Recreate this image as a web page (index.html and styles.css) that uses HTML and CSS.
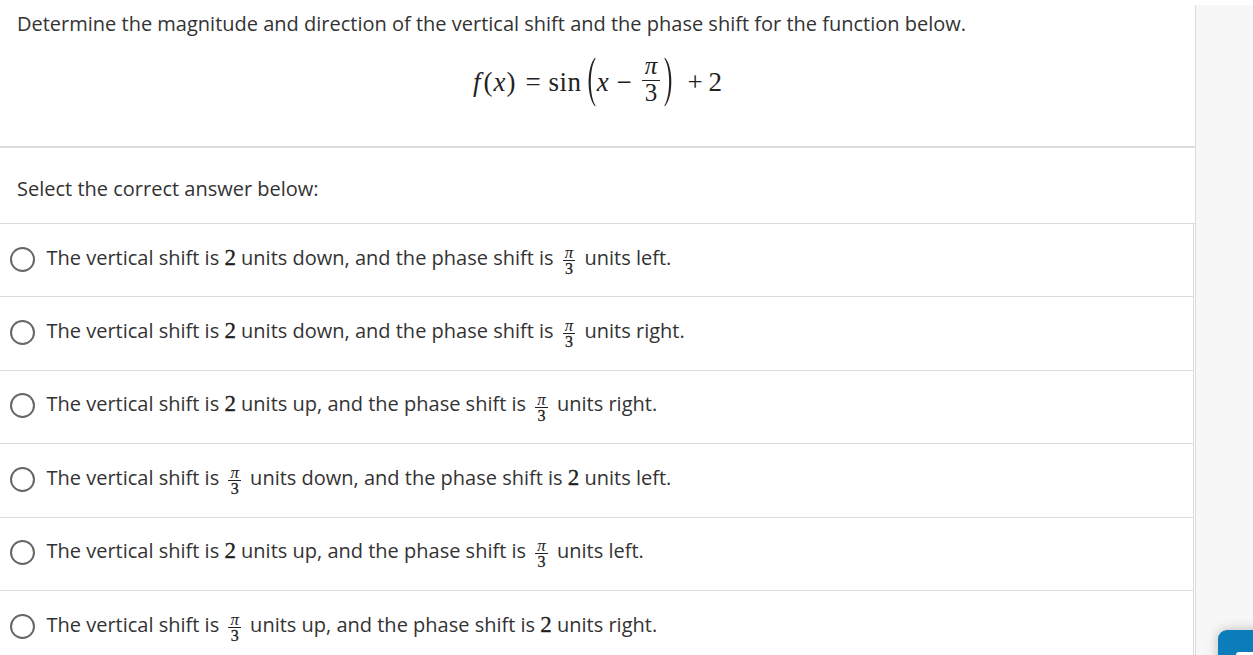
FILE: index.html
```html
<!DOCTYPE html>
<html lang="en">
<head>
<meta charset="utf-8">
<title>Question</title>
<link rel="stylesheet" href="styles.css">
</head>
<body>
<div class="page">
  <main class="main">
    <section class="question">
      <p class="prompt">Determine the magnitude and direction of the vertical shift and the phase shift for the function below.</p>
      <div class="formula">
        <span class="mi f">f</span><span class="mo">(</span><span class="mi x1">x</span><span class="mo">)</span>
        <span class="rel">=</span>
        <span class="op">sin</span>
        <svg class="paren" viewBox="0 0 12 50" width="12" height="50"><path d="M11,0.8 C2.5,10 2.5,40 11,49.2 L11.6,48.6 C5.2,39 5.2,11 11.6,1.4 Z"/></svg>
        <span class="mi">x</span>
        <span class="bin">−</span>
        <span class="dfrac"><span class="dnum mi">π</span><span class="dden">3</span></span>
        <svg class="paren" viewBox="0 0 12 50" width="12" height="50"><path d="M1,0.8 C9.5,10 9.5,40 1,49.2 L0.4,48.6 C6.8,39 6.8,11 0.4,1.4 Z"/></svg>
        <span class="bin plus">+</span>
        <span class="mn">2</span>
      </div>
    </section>
    <div class="instr">Select the correct answer below:</div>
    <ul class="options">
      <li class="option"><span class="radio"></span><span class="label">The vertical shift is <span class="num">2</span> units down, and the phase shift is <span class="frac"><span class="fnum">π</span><span class="fden">3</span></span> units left.</span></li>
      <li class="option"><span class="radio"></span><span class="label">The vertical shift is <span class="num">2</span> units down, and the phase shift is <span class="frac"><span class="fnum">π</span><span class="fden">3</span></span> units right.</span></li>
      <li class="option"><span class="radio"></span><span class="label">The vertical shift is <span class="num">2</span> units up, and the phase shift is <span class="frac"><span class="fnum">π</span><span class="fden">3</span></span> units right.</span></li>
      <li class="option"><span class="radio"></span><span class="label">The vertical shift is <span class="frac"><span class="fnum">π</span><span class="fden">3</span></span> units down, and the phase shift is <span class="num">2</span> units left.</span></li>
      <li class="option"><span class="radio"></span><span class="label">The vertical shift is <span class="num">2</span> units up, and the phase shift is <span class="frac"><span class="fnum">π</span><span class="fden">3</span></span> units left.</span></li>
      <li class="option"><span class="radio"></span><span class="label">The vertical shift is <span class="frac"><span class="fnum">π</span><span class="fden">3</span></span> units up, and the phase shift is <span class="num">2</span> units right.</span></li>
    </ul>
  </main>
  <aside class="side"></aside>
</div>
<div class="fab"><span class="fab-icon"></span></div>
</body>
</html>
```

FILE: styles.css
```css
html, body {
  margin: 0;
  padding: 0;
  background: #fff;
}
body {
  font-family: "Open Sans", "Noto Sans", sans-serif;
  color: #333;
  overflow: hidden;
}
.page {
  display: flex;
  height: 655px;
  overflow: hidden;
}
.main {
  width: 1195px;
  flex: none;
}
.side {
  flex: 1;
  margin-top: 5px;
  border-left: 1px solid #dcdcdc;
  background: #f7f7f7;
}

/* question */
.question {
  height: 146px;
  border-bottom: 2px solid #dcdcdc;
}
.prompt {
  margin: 0;
  padding: 10px 0 0 17px;
  font-size: 20px;
  line-height: 27px;
}
.formula {
  margin-top: 20px;
  height: 50px;
  display: flex;
  justify-content: center;
  align-items: center;
  font-family: "Liberation Serif", "DejaVu Serif", serif;
  font-size: 27px;
  color: #222;
}
.formula .mi { font-style: italic; }
.formula .f { margin-right: 3px; }
.formula .x1 { margin: 0 1px; }
.formula .rel { margin: 0 8px 0 10px; }
.formula .op { letter-spacing: 0.5px; }
.formula .bin { margin: 0 8px; }
.formula .plus { margin: 0 6px 0 10px; }
.paren { fill: #222; display: block; margin: 0 1px 0 2px; }
.dfrac {
  display: inline-flex;
  flex-direction: column;
  align-items: center;
  margin: 0 2px;
  transform: translateY(-2px);
  font-size: 25px;
}
.dnum {
  line-height: 22px;
  padding: 0 3px 3px;
  border-bottom: 1px solid #222;
}
.dden { line-height: 24px; }

/* instruction */
.instr {
  height: 76px;
  box-sizing: border-box;
  padding: 27px 0 0 17px;
  font-size: 20px;
  line-height: 27px;
  border-bottom: 1px solid #dcdcdc;
}

/* options */
.options {
  list-style: none;
  margin: 0;
  padding: 0;
  width: 1193px;
  border-right: 1px solid #dcdcdc;
}
.option {
  height: 72.4px;
  border-bottom: 1px solid #dcdcdc;
  display: flex;
  align-items: center;
}
.radio {
  flex: none;
  width: 25px;
  height: 25px;
  box-sizing: border-box;
  border: 2.5px solid #666;
  border-radius: 50%;
  margin-left: 9.5px;
  margin-right: 12px;
  transform: translateY(-1px);
}
.label {
  font-size: 20px;
  line-height: 29px;
  transform: translateY(-2px);
}
.num {
  font-family: "Liberation Serif", "DejaVu Serif", serif;
  font-size: 23px;
  color: #1e1e1e;
  -webkit-text-stroke: 0.3px #1e1e1e;
}
.frac {
  display: inline-flex;
  flex-direction: column;
  align-items: center;
  vertical-align: middle;
  font-family: "Liberation Serif", "DejaVu Serif", serif;
  color: #222;
  margin: 0 4px;
  height: 29px;
  transform: translateY(1px);
}
.fnum {
  font-style: italic;
  font-size: 17px;
  line-height: 14px;
  height: 13px;
  padding: 0 2px 1px;
  border-bottom: 1px solid #222;
}
.fden {
  line-height: 15px;
  font-size: 16px;
  -webkit-text-stroke: 0.3px #222;
}

/* floating button */
.fab {
  position: fixed;
  left: 1218px;
  top: 630px;
  width: 60px;
  height: 60px;
  border-radius: 9px;
  background: #0b7dbb;
  box-shadow: 0 0 12px rgba(0,0,0,0.25);
}
.fab-icon {
  position: absolute;
  left: 18px;
  top: 22px;
  width: 30px;
  height: 12px;
  border-radius: 3px;
  background: #fff;
}
```
